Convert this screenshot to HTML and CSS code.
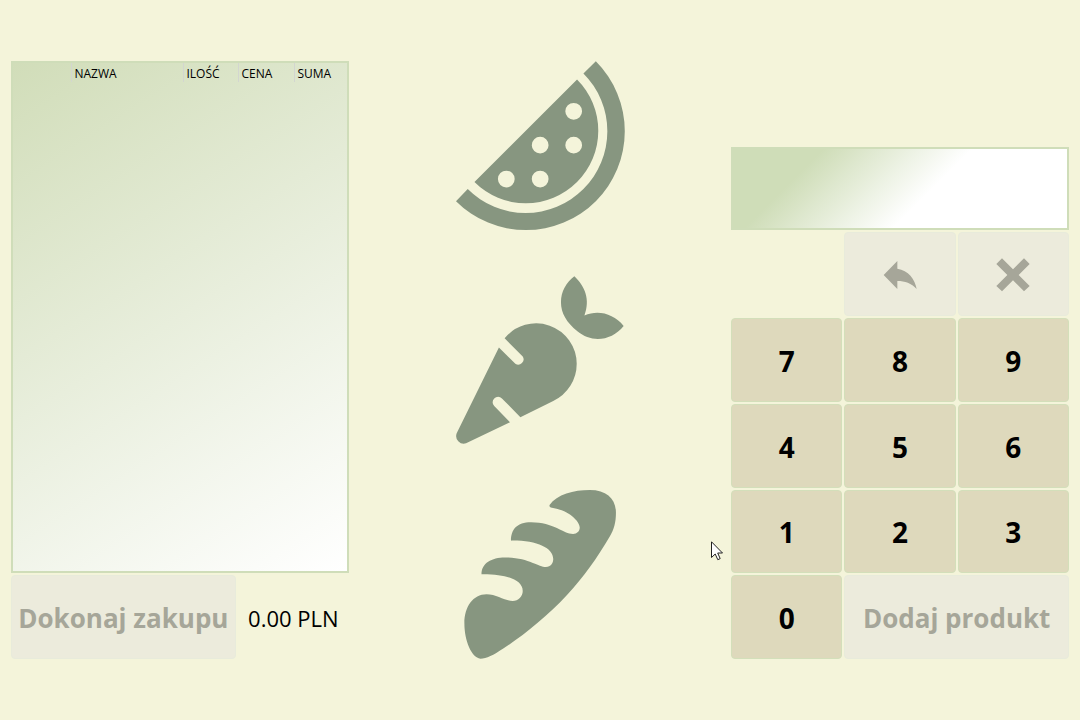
FILE: index.html
```html
<!DOCTYPE html>
<html lang="pl">
<head>
<meta charset="utf-8">
<title>Kasa</title>
<link rel="stylesheet" href="styles.css">
</head>
<body>
<main class="till">
  <section class="receipt">
    <div class="receipt-list">
      <table class="receipt-table">
        <colgroup>
          <col class="col-index"><col class="col-name"><col class="col-amount"><col class="col-price"><col>
        </colgroup>
        <thead>
          <tr><th></th><th>NAZWA</th><th>ILOŚĆ</th><th>CENA</th><th>SUMA</th></tr>
        </thead>
      </table>
    </div>
    <div class="receipt-footer">
      <button class="key key-text key-wide" disabled>Dokonaj zakupu</button>
      <output class="total">0.00 PLN</output>
    </div>
  </section>

  <nav class="categories">
    <button class="category" aria-label="Owoce">
      <svg viewBox="20 19 504 504">
        <path d="M437 20A294 294 0 0 1 20 437L55 401A243 243 0 0 0 400 56Z"/>
        <path fill-rule="evenodd" d="M381 74A216 216 0 0 1 75 380ZM346 169a25 25 0 1 0 50 0a25 25 0 1 0-50 0ZM246 270a25 25 0 1 0 50 0a25 25 0 1 0-50 0ZM346 270a25 25 0 1 0 50 0a25 25 0 1 0-50 0ZM145 371a25 25 0 1 0 50 0a25 25 0 1 0-50 0ZM246 371a25 25 0 1 0 50 0a25 25 0 1 0-50 0Z"/>
      </svg>
    </button>
    <button class="category" aria-label="Warzywa">
      <svg viewBox="20 19 504 504">
        <path d="M165 205A121 121 0 0 1 380 281A123 123 0 0 1 310 392L212 440L157 384A16 16 0 0 0 134 407L181 455L50 518A23 23 0 0 1 22 488L148 232L197 281A16 16 0 0 0 219 259Z"/>
        <path d="M373 20C405 50 421 90 403 137C445 119 490 132 520 168C485 212 425 220 382 184C350 157 333 130 333 97C333 65 348 40 373 20Z"/>
      </svg>
    </button>
    <button class="category" aria-label="Pieczywo">
      <svg viewBox="19 22 504 504">
        <path d="M298 67C320 35 370 22 418 22C470 22 496 50 496 90C496 120 490 140 478 160C440 225 400 282 350 335C290 400 220 455 160 495C130 515 110 525 92 525C65 522 44 470 44 420C44 370 70 333 110 333C140 333 165 353 188 353C205 353 218 338 218 323C218 290 170 272 95 273C95 240 125 223 165 223C235 223 265 252 287 252C302 252 309 240 309 228C309 195 260 172 183 173C183 140 200 118 243 118C310 118 340 153 368 153C380 153 388 145 388 134C388 115 355 82 305 75C299 74 297 71 298 67Z"/>
      </svg>
    </button>
  </nav>

  <section class="keypad">
    <input class="display" type="text" aria-label="Ilość" readonly>
    <button class="key key-back" aria-label="Cofnij" disabled>
      <svg viewBox="39 37 102 102"><path d="M41 88L82 46V69C115 74 135 100 140 130C124 113 105 106 82 106V130Z"/></svg>
    </button>
    <button class="key" aria-label="Wyczyść" disabled>
      <svg viewBox="379 37 102 102"><path d="M397 38L430 71L463 38L480 55L447 88L480 121L463 137L430 104L397 137L380 121L413 88L380 55Z"/></svg>
    </button>
    <button class="key">7</button>
    <button class="key">8</button>
    <button class="key">9</button>
    <button class="key">4</button>
    <button class="key">5</button>
    <button class="key">6</button>
    <button class="key">1</button>
    <button class="key">2</button>
    <button class="key">3</button>
    <button class="key">0</button>
    <button class="key key-text key-wide" disabled>Dodaj produkt</button>
  </section>
</main>
<svg class="pointer" viewBox="0 0 12 20" aria-hidden="true"><path d="M.5 .8V16.5L4.2 13L6.8 18.7L9.2 17.6L6.7 12H11.5Z"/></svg>
</body>
</html>
```
FILE: styles.css
```css
* {
  box-sizing: border-box;
}

body {
  margin: 0;
  background: #f4f4da;
  color: #000;
  font-family: "Open Sans", "Noto Sans", sans-serif;
}

button {
  padding: 0;
  border: 0;
  font: inherit;
}

.till {
  display: grid;
  grid-template-columns: repeat(3, minmax(0, 1fr));
  gap: 22px;
  height: 100vh;
  padding: 61px 11px;
}

.receipt,
.keypad {
  display: grid;
  grid-template-rows: repeat(7, minmax(0, 1fr));
  gap: 2px;
}

.receipt-list {
  grid-row: span 6;
  border: 2px solid #cfddb9;
  background: linear-gradient(147deg, #d1ddb9, #fff);
}

.receipt-table {
  width: 100%;
  border-collapse: collapse;
  table-layout: fixed;
}

.receipt-table th {
  height: 19px;
  padding: 2px 3px 0;
  border-right: 1px solid #d3d6d0;
  font-size: 12px;
  font-weight: 400;
  line-height: 17px;
  text-align: left;
}

.receipt-table th:last-child {
  border-right: 0;
}

.col-index {
  width: 58px;
}

.col-name {
  width: 112px;
}

.col-amount {
  width: 55px;
}

.col-price {
  width: 56px;
}

.receipt-footer {
  display: grid;
  grid-template-columns: repeat(3, minmax(0, 1fr));
  gap: 2px;
}

.total {
  display: flex;
  align-items: center;
  justify-content: center;
  padding-top: 2px;
  font-size: 22px;
  white-space: nowrap;
}

.categories {
  display: flex;
  flex-direction: column;
  align-items: center;
  justify-content: space-between;
}

.category {
  width: 50%;
  background: none;
}

.category svg {
  display: block;
  width: 100%;
  overflow: visible;
  fill: #879680;
}

.keypad {
  grid-template-columns: repeat(3, minmax(0, 1fr));
}

/* Keeps the row above the display free */
.keypad::before {
  content: "";
  grid-column: 1 / -1;
}

.display {
  grid-column: 1 / -1;
  width: 100%;
  min-width: 0;
  padding: 0 8px;
  border: 2px solid #cfddb9;
  border-radius: 0;
  outline: 0;
  background: linear-gradient(135deg, #cfddb8 22%, #fff 58%);
  font: inherit;
  font-size: 28px;
}

.key {
  display: flex;
  align-items: center;
  justify-content: center;
  padding-top: 2px;
  border: 1px solid #d3dfba;
  border-radius: 4px;
  background: #ded9bc;
  color: #000;
  font-size: 28px;
  font-weight: 700;
  white-space: nowrap;
}

.key:disabled {
  border-color: #e8ebdb;
  background: #ecebdc;
  color: #a6a699;
}

.key-text {
  font-size: 26px;
}

.key-back {
  grid-column: 2;
}

.key-wide {
  grid-column: span 2;
}

.key svg {
  width: 34px;
  height: 34px;
  fill: currentColor;
}

.pointer {
  position: absolute;
  top: 541px;
  left: 711px;
  width: 12px;
  height: 20px;
  fill: #fff;
  stroke: #222;
}
```
